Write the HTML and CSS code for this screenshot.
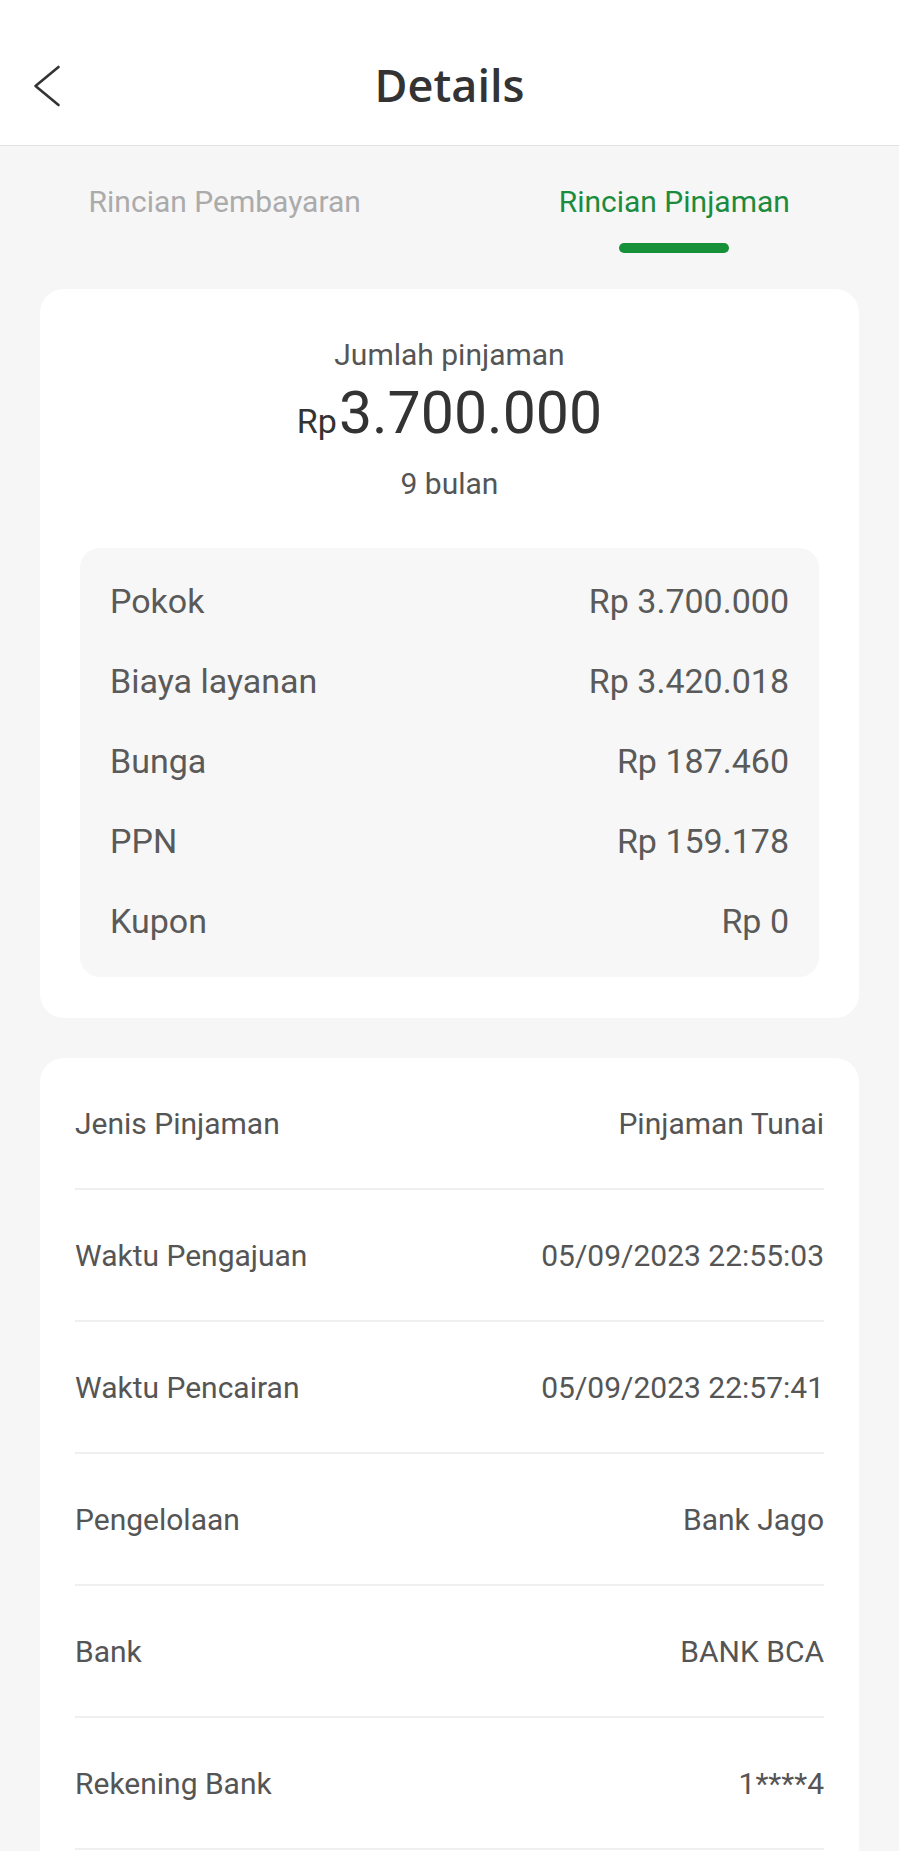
FILE: index.html
```html
<!DOCTYPE html>
<html lang="id">
<head>
<meta charset="utf-8">
<title>Details</title>
<link rel="stylesheet" href="styles.css">
</head>
<body>
<header class="topbar">
  <div class="back">
    <svg width="30" height="46" viewBox="0 0 30 46" aria-hidden="true">
      <path d="M26.5 4 L3.5 23 L26.5 42" fill="none" stroke="#333" stroke-width="2.6" stroke-linecap="round" stroke-linejoin="round"/>
    </svg>
  </div>
  <h1 class="title">Details</h1>
  <div class="spacer"></div>
</header>

<nav class="tabs">
  <div class="tab">Rincian Pembayaran</div>
  <div class="tab active">Rincian Pinjaman<span class="bar"></span></div>
</nav>

<main class="content">
  <section class="card summary">
    <div class="label">Jumlah pinjaman</div>
    <div class="amount"><span class="cur">Rp</span>3.700.000</div>
    <div class="term">9 bulan</div>
    <div class="breakdown">
      <div class="brow"><span>Pokok</span><span>Rp 3.700.000</span></div>
      <div class="brow"><span>Biaya layanan</span><span>Rp 3.420.018</span></div>
      <div class="brow"><span>Bunga</span><span>Rp 187.460</span></div>
      <div class="brow"><span>PPN</span><span>Rp 159.178</span></div>
      <div class="brow"><span>Kupon</span><span>Rp 0</span></div>
    </div>
  </section>

  <section class="card info">
    <div class="irow"><span>Jenis Pinjaman</span><span>Pinjaman Tunai</span></div>
    <div class="irow"><span>Waktu Pengajuan</span><span>05/09/2023 22:55:03</span></div>
    <div class="irow"><span>Waktu Pencairan</span><span>05/09/2023 22:57:41</span></div>
    <div class="irow"><span>Pengelolaan</span><span>Bank Jago</span></div>
    <div class="irow"><span>Bank</span><span>BANK BCA</span></div>
    <div class="irow"><span>Rekening Bank</span><span>1****4</span></div>
  </section>
</main>
</body>
</html>
```

FILE: styles.css
```css
* { box-sizing: border-box; }

html, body {
  margin: 0;
  padding: 0;
  background: #f6f6f6;
  font-family: Roboto, "Liberation Sans", Arial, sans-serif;
  color: #555;
}

.topbar {
  height: 146px;
  background: #fff;
  border-bottom: 1px solid #e2e2e2;
  display: grid;
  grid-template-columns: 110px 1fr 110px;
  align-items: center;
  padding-top: 55px;
  padding-bottom: 30px;
}

.back {
  padding-left: 32px;
  display: flex;
  align-items: center;
  height: 60px;
}

.back svg { display: block; margin-top: 2px; }

.title {
  margin: 0;
  text-align: center;
  font-family: "Open Sans", "Noto Sans", sans-serif;
  font-weight: 600;
  font-size: 45px;
  line-height: 60px;
  color: #333;
}

.tabs {
  display: grid;
  grid-template-columns: 1fr 1fr;
  padding-top: 36px;
}

.tab {
  display: flex;
  flex-direction: column;
  align-items: center;
  font-size: 30px;
  line-height: 40px;
  color: #ababab;
}

.tab.active { color: #1b8b3d; }

.tab .bar {
  display: block;
  width: 110px;
  height: 10px;
  border-radius: 5px;
  background: #17903a;
  margin-top: 21px;
}

.content {
  padding: 36px 40px 0;
  display: flex;
  flex-direction: column;
  gap: 40px;
}

.card {
  background: #fff;
  border-radius: 24px;
}

.summary {
  padding: 46px 40px 41px;
  display: flex;
  flex-direction: column;
  align-items: center;
}

.label {
  font-size: 30px;
  line-height: 40px;
  color: #555;
}

.amount {
  font-size: 59px;
  line-height: 76px;
  color: #333;
}

.amount .cur {
  font-size: 34px;
  line-height: 40px;
  margin-right: 2px;
}

.term {
  font-size: 30px;
  line-height: 40px;
  margin-top: 13px;
  color: #555;
}

.breakdown {
  align-self: stretch;
  margin-top: 44px;
  background: #f7f7f7;
  border-radius: 20px;
  padding: 13px 30px 16px;
}

.brow {
  display: flex;
  justify-content: space-between;
  align-items: center;
  height: 80px;
  font-size: 34px;
  line-height: 80px;
  color: #5a5a5a;
}

.info {
  padding: 0 35px 40px;
}

.irow {
  display: flex;
  justify-content: space-between;
  align-items: center;
  min-height: 132px;
  padding-top: 2px;
  border-bottom: 2px solid #efefef;
  font-size: 30px;
  line-height: 40px;
  color: #555;
}
```
